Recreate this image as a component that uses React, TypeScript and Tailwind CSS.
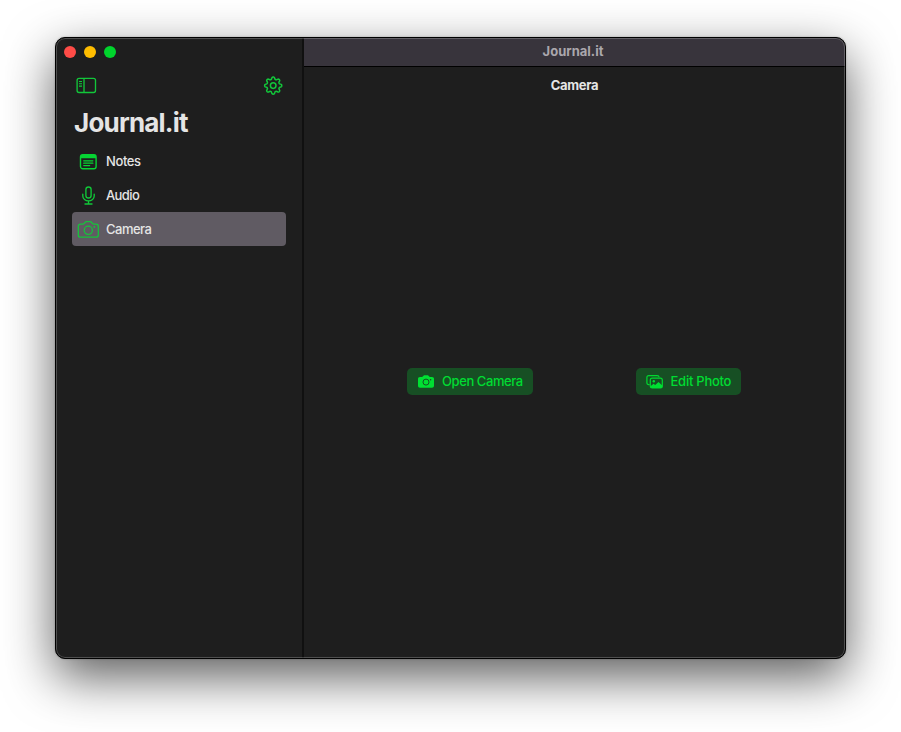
import React from "react";

const SidebarIcon = () => (
  <svg width="21" height="17" viewBox="0 0 21 17" fill="none" stroke="#12c63a" strokeWidth="1.35">
    <rect x="1.1" y="1.3" width="18.4" height="14.2" rx="2" />
    <path d="M8 1.3v14.2" />
    <path d="M3 4.5h3M3 6.8h3M3 9.1h3" strokeWidth="1.1" />
  </svg>
);

function gearPath() {
  const points: string[] = [];
  for (let i = 0; i <= 160; i++) {
    const a = (i / 160) * Math.PI * 2;
    const wave = Math.tanh(Math.cos(a * 8) * 1.5) / Math.tanh(1.5);
    const r = 7.45 + wave * 1.1;
    points.push((10.2 + Math.sin(a) * r).toFixed(2) + " " + (9.6 - Math.cos(a) * r).toFixed(2));
  }
  return "M" + points.join("L") + "Z";
}

const GearIcon = () => (
  <svg width="20" height="20" viewBox="0 0 20 20" fill="none" stroke="#12c63a" strokeWidth="1.5" strokeLinejoin="round">
    <path d={gearPath()} />
    <circle cx="10.2" cy="9.6" r="2.8" />
  </svg>
);

const NotesIcon = () => (
  <svg width="18" height="16" viewBox="-0.5 0.5 18 16" fill="none" stroke="#06d433" strokeWidth="1.4">
    <rect x="1" y="1.2" width="15.6" height="14" rx="2.2" />
    <path d="M1 4.8V3.200a2 2 0 0 1 2-2h11.600a2 2 0 0 1 2 2v1.600z" fill="#06d433" stroke="none" />
    <path d="M4.200 7.300h9.200M4.200 9.700h9.200M4.200 12.100h6" strokeWidth="1.200" strokeLinecap="round" />
  </svg>
);

const MicIcon = () => (
  <svg width="14" height="19" viewBox="-0.5 0 14 19" fill="none" stroke="#10c838" strokeWidth="1.35" strokeLinecap="round">
    <rect x="4.400" y="1" width="5.200" height="11" rx="2.600" />
    <path d="M1.300 8.200v1.700a5.700 5 0 0 0 11.400 0V8.200M7 15v3M3.500 18h7" />
  </svg>
);

const CameraIcon = () => (
  <svg width="22" height="18" viewBox="-0.3 0.4 22 18" fill="none" stroke="#16c43b" strokeWidth="1.3">
    <path d="M3.200 3.500h2.300c.6 0 .9-.2 1.300-.6l.9-1c.5-.6.9-.8 1.600-.8h3.400c.7 0 1.100.2 1.600.8l.9 1c.4.4.7.6 1.300.6h2.300c1.400 0 2.200.8 2.200 2.200v8.700c0 1.400-.8 2.200-2.200 2.200H3.200c-1.400 0-2.200-.8-2.200-2.200V5.700c0-1.400.8-2.200 2.200-2.200z" />
    <circle cx="11" cy="9.700" r="4.100" />
    <circle cx="17" cy="6.500" r="1" fill="#16c43b" stroke="none" />
  </svg>
);

const CameraFillIcon = () => (
  <svg width="16" height="13" viewBox="0 0 16 13" fill="none">
    <path d="M2 2h2c.4 0 .6-.1.8-.4l.7-.8C5.900.3 6.200.2 6.700.2h2.600c.5 0 .8.1 1.200.6l.7.8c.2.3.4.4.8.4h2c1.200 0 2 .7 2 1.900v6.900c0 1.200-.8 1.900-2 1.900H2c-1.200 0-2-.7-2-1.900V3.900C0 2.700.8 2 2 2z" fill="#00e032" />
    <circle cx="8" cy="7.100" r="3" stroke="#174f24" strokeWidth="1" />
    <circle cx="12.600" cy="4.700" r=".8" fill="#174f24" />
  </svg>
);

const PhotosIcon = () => (
  <svg width="17" height="14" viewBox="-0.3 0.3 17 14" fill="none" stroke="#00d930" strokeWidth="1.200">
    <path d="M3.300 9.900H2.500C1.200 9.900.6 9.300.6 8V2.900C.6 1.600 1.200 1 2.500 1h8.400c1.200 0 1.800.4 1.900 1.500" />
    <rect x="4" y="3.400" width="12" height="9.900" rx="1.900" />
    <path d="M4.200 11.500 7.200 9l1.700 1.300 3.300-3 3.800 3.600v1c0 .9-.6 1.400-1.500 1.400H5.500c-.8 0-1.300-.7-1.300-1.800z" fill="#00e032" stroke="none" />
    <circle cx="7.500" cy="6.500" r="1.200" fill="#00e032" stroke="none" />
  </svg>
);

const items = [
  { label: "Notes", icon: <NotesIcon />, tracking: "tracking-[-0.4px]" },
  { label: "Audio", icon: <MicIcon />, tracking: "tracking-[-0.6px]" },
  { label: "Camera", icon: <CameraIcon />, tracking: "tracking-[-0.5px]", selected: true },
];

export default function App() {
  return (
    <div className="h-[732px] w-[901px] overflow-hidden bg-white pt-[37px] pl-[55px] font-['Inter','Liberation_Sans',sans-serif] text-[13px] text-[#e5e5e5]">
      <div className="relative flex h-[622px] w-[791px] overflow-hidden rounded-[10px] border border-black bg-[#1e1e1e] shadow-[0_18px_50px_rgba(0,0,0,0.64),0_0_2px_rgba(0,0,0,0.3)]">
        <aside className="flex w-[248px] shrink-0 flex-col border-r-2 border-[#101010]">
          <div className="flex h-7 items-center gap-2 pl-2">
            <span className="size-3 rounded-full bg-[#ff4c47]" />
            <span className="size-3 rounded-full bg-[#ffbd00]" />
            <span className="size-3 rounded-full bg-[#00d42c]" />
          </div>
          <div className="flex h-[39px] items-center justify-between pr-[19px] pl-5">
            <SidebarIcon />
            <GearIcon />
          </div>
          <h1 className="h-[39px] pl-[18px] text-[26px] leading-[36px] font-bold tracking-[-0.8px]">Journal.it</h1>
          <nav className="pr-[15.6px] pl-4">
            {items.map((item) => (
              <div
                key={item.label}
                className={"flex h-[34px] items-center rounded-[4px] pl-[5px] " + (item.selected ? "bg-[#605b63]" : "")}
              >
                <span className="flex w-[22px] justify-center pt-px">{item.icon}</span>
                <span className={"pt-0.5 pl-[7px] font-medium " + item.tracking}>{item.label}</span>
              </div>
            ))}
          </nav>
        </aside>
        <main className="flex flex-1 flex-col">
          <div className="flex h-[29px] items-center justify-center border-b border-black bg-[#38343c] pr-[3px] font-bold text-[#aaa7ad]">Journal.it</div>
          <div className="flex h-[38px] items-center justify-center font-bold tracking-[-0.3px]">Camera</div>
          <div className="flex flex-1 items-center justify-evenly pr-px text-[#00dc32]">
            <button className="flex h-[27px] w-[126px] items-center rounded-[5px] bg-[#174f24] pl-[11px]">
              <CameraFillIcon />
              <span className="pl-2 font-medium tracking-[-0.42px] whitespace-nowrap">Open Camera</span>
            </button>
            <button className="flex h-[27px] w-[105px] items-center rounded-[5px] bg-[#174f24] pl-2.5">
              <PhotosIcon />
              <span className="pl-[7.5px] font-medium tracking-[-0.25px] whitespace-nowrap">Edit Photo</span>
            </button>
          </div>
        </main>
        <div className="pointer-events-none absolute inset-0 rounded-[9px] border border-[#ffffff38]" />
      </div>
    </div>
  );
}
